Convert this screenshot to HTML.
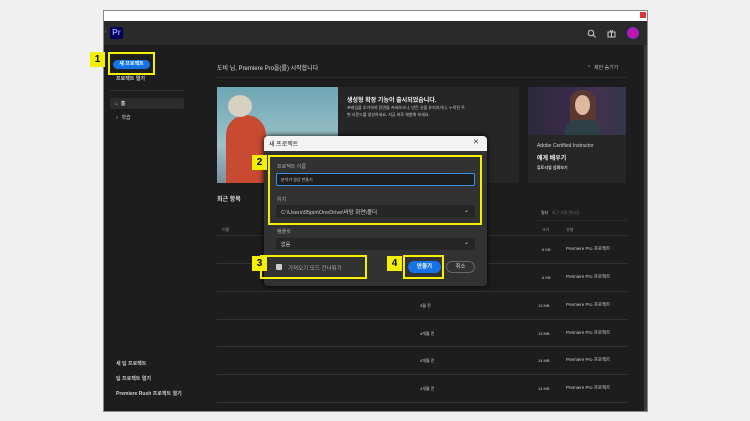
<!DOCTYPE html>
<html><head><meta charset="utf-8"><style>
*{margin:0;padding:0;box-sizing:border-box}
body{width:750px;height:421px;background:#f0f0f0;position:relative;overflow:hidden;font-family:"Liberation Sans","Noto Sans CJK KR",sans-serif;color:#ddd}
.a{position:absolute}
.t{position:absolute;white-space:nowrap;font-size:5px;color:#cfcfcf}
.b{font-weight:bold}
.yl{position:absolute;border:2px solid #f4f000}
.num{position:absolute;background:#f4f000;color:#000;font-weight:bold;font-size:10px;text-align:center;line-height:15px;width:15px;height:15px}
.line{position:absolute;height:1px;background:#333}
</style></head><body>
<div class="a" style="left:103px;top:10px;width:545px;height:402px;background:#1d1d1d;border:1px solid #888"></div>
<div class="a" style="left:104px;top:11px;width:543px;height:10px;background:#fff"></div>
<div class="a" style="left:640px;top:12px;width:6px;height:6px;background:#d33"></div>
<div class="a" style="left:104px;top:21px;width:543px;height:24px;background:#2a2a2a"></div>
<div class="t" style="left:105px;top:29px;color:#999">‹</div>
<div class="a" style="left:110px;top:27px;width:13px;height:12px;background:#00005b;border-radius:2px;color:#9999ff;font-size:8px;font-weight:bold;line-height:12px;text-align:center">Pr</div>
<svg class="a" style="left:587px;top:29px" width="9" height="9"><circle cx="4" cy="4" r="2.8" stroke="#ccc" fill="none"/><path d="M6 6l2.5 2.5" stroke="#ccc"/></svg>
<svg class="a" style="left:607px;top:29px" width="9" height="9"><rect x="1" y="3" width="7" height="5" stroke="#ccc" fill="none"/><path d="M4.5 3v5M1 3h7M3 1l1.5 2 1.5-2" stroke="#ccc" fill="none"/></svg>
<div class="a" style="left:627px;top:27px;width:12px;height:12px;border-radius:50%;background:radial-gradient(#e0a,#6040c0)"></div>
<div class="a" style="left:644px;top:45px;width:3px;height:366px;background:#3a3a3a"></div>

<!-- sidebar -->
<div class="a" style="left:113px;top:60px;width:37px;height:9px;background:#1473e6;border-radius:5px;color:#fff;font-size:5px;line-height:9px;text-align:center;font-weight:bold">새 프로젝트</div>
<div class="yl" style="left:108px;top:52px;width:47px;height:23px"></div>
<div class="num" style="left:90px;top:52px">1</div>
<div class="t b" style="left:116px;top:75px">프로젝트 열기</div>
<div class="line" style="left:110px;top:90px;width:75px;background:#2e2e2e"></div>
<div class="a" style="left:110px;top:98px;width:74px;height:11px;background:#2c2c2c;border-radius:2px"></div>
<div class="t b" style="left:115px;top:100px">⌂ &nbsp;홈</div>
<div class="t" style="left:115px;top:114px">♀ &nbsp;학습</div>
<div class="t b" style="left:116px;top:360px">새 팀 프로젝트</div>
<div class="t b" style="left:116px;top:375px">팀 프로젝트 열기</div>
<div class="t b" style="left:116px;top:390px">Premiere Rush 프로젝트 열기</div>

<!-- main -->
<div class="t" style="left:217px;top:63px;font-size:6px;color:#ddd">도비 님, Premiere Pro을(를) 시작합니다</div>
<div class="t" style="left:587px;top:64px;color:#bbb">⌃ &nbsp;제안 숨기기</div>
<div class="line" style="left:217px;top:77px;width:410px;background:#2c2c2c"></div>
<div class="a" style="left:217px;top:87px;width:302px;height:96px;background:#262626;border-radius:2px"></div>
<div class="a" style="left:217px;top:87px;width:121px;height:96px;background:linear-gradient(180deg,#6ea6b5 0%,#9cc2c8 60%,#7a8fa0 100%)"></div>
<div class="a" style="left:226px;top:115px;width:40px;height:68px;background:#c84a30;border-radius:20px 20px 0 0"></div>
<div class="a" style="left:228px;top:95px;width:24px;height:22px;background:#d8d0c0;border-radius:50%"></div>
<div class="t b" style="left:347px;top:95px;font-size:6px;color:#eee">생성형 확장 기능이 출시되었습니다.</div>
<div class="t" style="left:347px;top:105px;font-size:4px">프레임을 추가하여 장면을 커버하거나, 만든 샷을 유지하거나, 누락된 주</div>
<div class="t" style="left:347px;top:112px;font-size:4px">변 사운드를 생성하세요. 지금 바로 체험해 보세요.</div>
<div class="a" style="left:528px;top:87px;width:98px;height:96px;background:#262626;border-radius:2px"></div>
<div class="a" style="left:528px;top:87px;width:98px;height:48px;background:linear-gradient(90deg,#2a2a3a,#3a2a4a 40%,#453050 70%,#303848)"></div>
<div class="a" style="left:570px;top:90px;width:26px;height:45px;background:#5a3a30;border-radius:12px 12px 0 0"></div>
<div class="a" style="left:575px;top:95px;width:15px;height:20px;background:#e0b8a0;border-radius:50%"></div>
<div class="a" style="left:565px;top:120px;width:36px;height:15px;background:#2d4045;border-radius:10px 10px 0 0"></div>
<div class="t" style="left:537px;top:143px">Adobe Certified Instructor</div>
<div class="t b" style="left:537px;top:153px;font-size:6px;color:#eee">에게 배우기</div>
<div class="t b" style="left:537px;top:165px;font-size:4px">튜토리얼 살펴보기</div>

<div class="t b" style="left:217px;top:194px;font-size:6px;color:#ddd">최근 항목</div>
<div class="t" style="left:541px;top:210px;font-size:4px">필터 &nbsp;&nbsp;<span style="color:#666">최근 사용 필터링</span></div>
<div class="line" style="left:536px;top:220px;width:91px;background:#2a2a2a"></div>
<div class="t" style="left:222px;top:227px;font-size:4px;color:#999">이름</div>
<div class="t" style="left:542px;top:227px;font-size:4px;color:#999">크기</div>
<div class="t" style="left:566px;top:227px;font-size:4px;color:#999">유형</div>
<div class="line" style="left:217px;top:235px;width:410px"></div>
<div class="line" style="left:217px;top:263px;width:410px"></div>
<div class="line" style="left:217px;top:291px;width:410px"></div>
<div class="line" style="left:217px;top:319px;width:410px"></div>
<div class="line" style="left:217px;top:346px;width:410px"></div>
<div class="line" style="left:217px;top:374px;width:410px"></div>
<div class="line" style="left:217px;top:402px;width:410px"></div>
<div class="t" style="left:542px;top:247px;font-size:4px">6 KB</div><div class="t" style="left:566px;top:246px;font-size:4.5px">Premiere Pro 프로젝트</div>
<div class="t" style="left:542px;top:275px;font-size:4px">6 KB</div><div class="t" style="left:566px;top:274px;font-size:4.5px">Premiere Pro 프로젝트</div>
<div class="t" style="left:420px;top:303px;font-size:4px">3월 전</div><div class="t" style="left:538px;top:303px;font-size:4px">13 MB</div><div class="t" style="left:566px;top:302px;font-size:4.5px">Premiere Pro 프로젝트</div>
<div class="t" style="left:420px;top:331px;font-size:4px">4개월 전</div><div class="t" style="left:538px;top:331px;font-size:4px">13 MB</div><div class="t" style="left:566px;top:330px;font-size:4.5px">Premiere Pro 프로젝트</div>
<div class="t" style="left:420px;top:358px;font-size:4px">4개월 전</div><div class="t" style="left:538px;top:358px;font-size:4px">14 MB</div><div class="t" style="left:566px;top:357px;font-size:4.5px">Premiere Pro 프로젝트</div>
<div class="t" style="left:420px;top:386px;font-size:4px">4개월 전</div><div class="t" style="left:538px;top:386px;font-size:4px">14 MB</div><div class="t" style="left:566px;top:385px;font-size:4.5px">Premiere Pro 프로젝트</div>

<!-- dialog -->
<div class="a" style="left:264px;top:136px;width:223px;height:150px;background:#323232;border-radius:4px;box-shadow:0 0 6px #000"></div>
<div class="a" style="left:264px;top:136px;width:223px;height:15px;background:#f3f3f3;border-radius:4px 4px 0 0"></div>
<div class="t" style="left:269px;top:139px;font-size:6px;color:#222">새 프로젝트</div>
<div class="t" style="left:473px;top:138px;font-size:7px;color:#333">✕</div>
<div class="yl" style="left:268px;top:155px;width:214px;height:70px"></div>
<div class="num" style="left:252px;top:155px">2</div>
<div class="t" style="left:277px;top:163px;font-size:5px;color:#aaa">프로젝트 이름</div>
<div class="a" style="left:276px;top:173px;width:199px;height:13px;background:#1e1e1e;border:1px solid #3a8fe0;border-radius:2px"></div>
<div class="t" style="left:281px;top:177px;font-size:4px">분석가 영상 만들기</div>
<div class="t" style="left:277px;top:196px;font-size:5px;color:#aaa">위치</div>
<div class="a" style="left:276px;top:205px;width:199px;height:13px;background:#262626;border-radius:2px"></div>
<div class="t" style="left:281px;top:208px;font-size:5.5px">C:\Users\95pin\OneDrive\바탕 화면\폴더</div>
<div class="t" style="left:464px;top:207px;font-size:6px">⌄</div>
<div class="t" style="left:277px;top:228px;font-size:5px;color:#aaa">템플릿</div>
<div class="a" style="left:276px;top:238px;width:199px;height:12px;background:#262626;border-radius:2px"></div>
<div class="t" style="left:281px;top:241px;font-size:5px">없음</div>
<div class="t" style="left:464px;top:239px;font-size:6px">⌄</div>
<div class="yl" style="left:260px;top:255px;width:107px;height:24px"></div>
<div class="num" style="left:252px;top:256px">3</div>
<div class="a" style="left:276px;top:264px;width:6px;height:6px;background:#ccc;border-radius:1px"></div>
<div class="t" style="left:288px;top:264px;font-size:5.5px;color:#aaa">가져오기 모드 건너뛰기</div>
<div class="yl" style="left:403px;top:255px;width:41px;height:24px"></div>
<div class="num" style="left:387px;top:256px">4</div>
<div class="a" style="left:408px;top:261px;width:33px;height:12px;background:#1473e6;border-radius:6px;color:#fff;font-size:5.5px;line-height:12px;text-align:center;font-weight:bold">만들기</div>
<div class="a" style="left:446px;top:261px;width:29px;height:12px;border:1px solid #666;border-radius:6px;color:#ddd;font-size:5.5px;line-height:10px;text-align:center">취소</div>
</body></html>
